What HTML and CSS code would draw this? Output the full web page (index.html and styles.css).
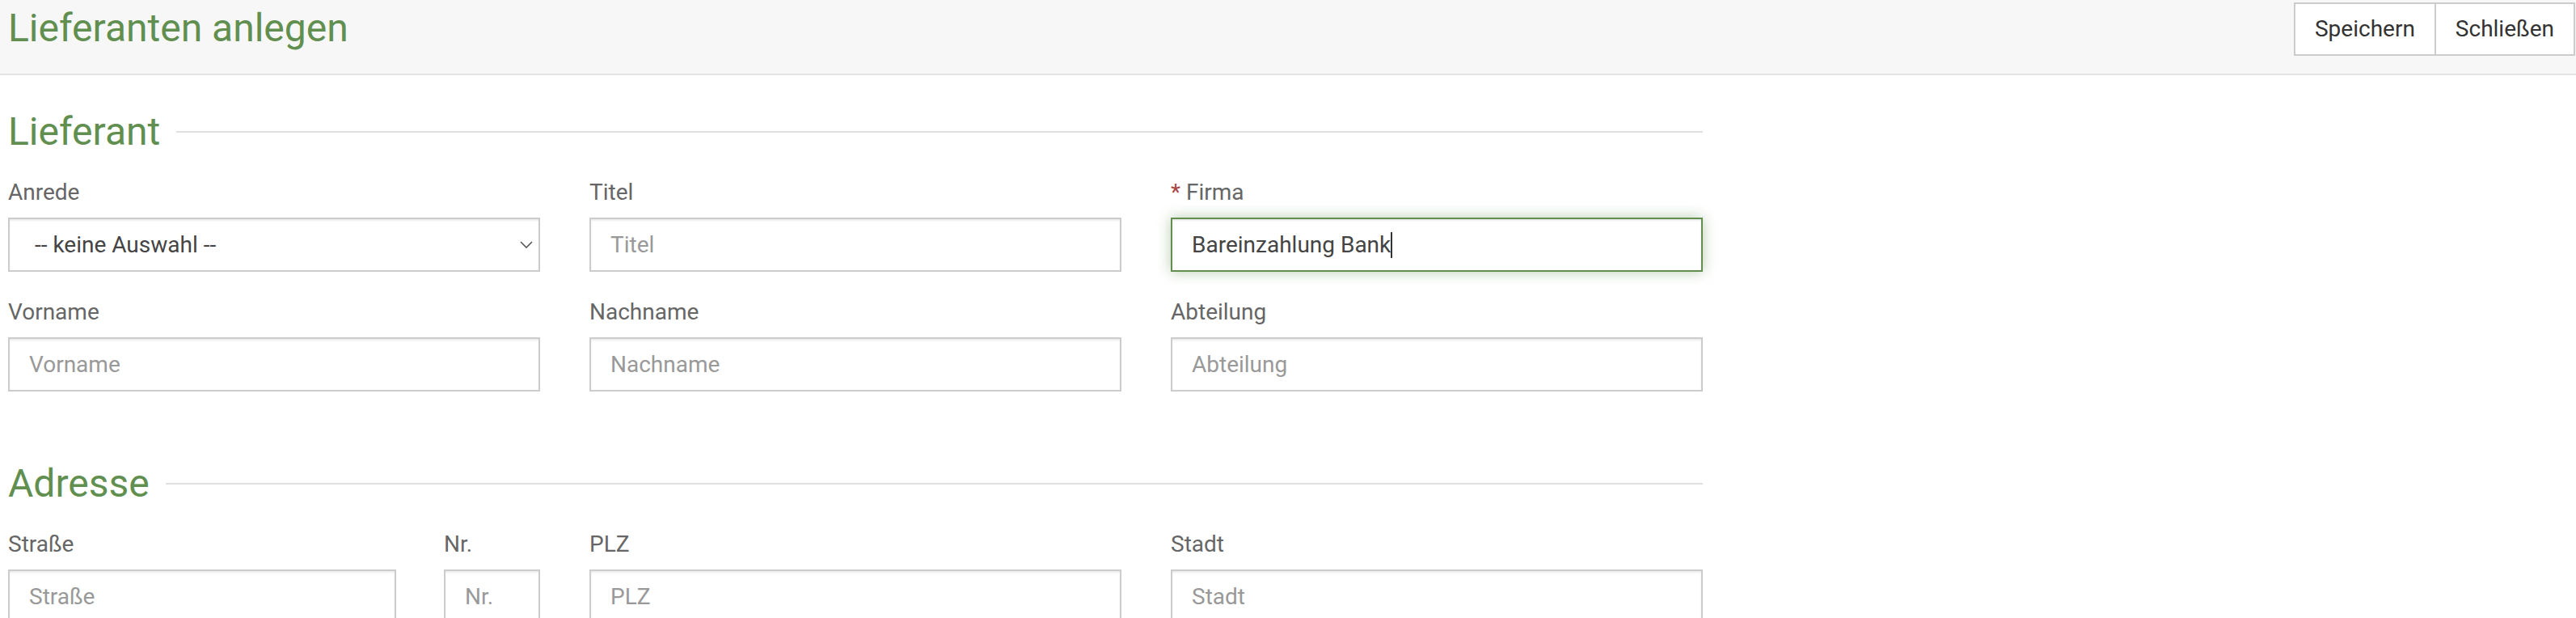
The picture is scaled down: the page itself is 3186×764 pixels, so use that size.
FILE: index.html
```html
<!DOCTYPE html>
<html lang="de">
<head>
<meta charset="utf-8">
<title>Lieferanten anlegen</title>
<link rel="stylesheet" href="styles.css">
</head>
<body>
<header class="topbar">
  <h1 class="page-title">Lieferanten anlegen</h1>
  <div class="btn-group">
    <button type="button" class="btn">Speichern</button>
    <button type="button" class="btn">Schließen</button>
  </div>
</header>
<main class="content">
  <form class="form">
    <section class="fieldset">
      <h2 class="legend">Lieferant</h2>
      <div class="grid">
        <div class="group">
          <label class="label">Anrede</label>
          <div class="field">
            <select class="control select">
              <option>-- keine Auswahl --</option>
            </select>
            <svg class="chevron" width="16" height="9" viewBox="0 0 16 9"><path d="M1 1 L8 8 L15 1" fill="none" stroke="#555" stroke-width="1.6"/></svg>
          </div>
        </div>
        <div class="group">
          <label class="label">Titel</label>
          <div class="field"><input class="control" type="text" placeholder="Titel"></div>
        </div>
        <div class="group">
          <label class="label"><span class="req">*</span> Firma</label>
          <div class="field">
            <input class="control focused" type="text" value="Bareinzahlung Bank">
            <span class="caret"></span>
          </div>
        </div>
        <div class="group">
          <label class="label">Vorname</label>
          <div class="field"><input class="control" type="text" placeholder="Vorname"></div>
        </div>
        <div class="group">
          <label class="label">Nachname</label>
          <div class="field"><input class="control" type="text" placeholder="Nachname"></div>
        </div>
        <div class="group">
          <label class="label">Abteilung</label>
          <div class="field"><input class="control" type="text" placeholder="Abteilung"></div>
        </div>
      </div>
    </section>
    <section class="fieldset">
      <h2 class="legend">Adresse</h2>
      <div class="grid">
        <div class="subgrid">
          <div class="group">
            <label class="label">Straße</label>
            <div class="field"><input class="control" type="text" placeholder="Straße"></div>
          </div>
          <div class="group">
            <label class="label">Nr.</label>
            <div class="field"><input class="control" type="text" placeholder="Nr."></div>
          </div>
        </div>
        <div class="group">
          <label class="label">PLZ</label>
          <div class="field"><input class="control" type="text" placeholder="PLZ"></div>
        </div>
        <div class="group">
          <label class="label">Stadt</label>
          <div class="field"><input class="control" type="text" placeholder="Stadt"></div>
        </div>
      </div>
    </section>
  </form>
</main>
</body>
</html>
```
FILE: styles.css
```css
* { box-sizing: border-box; }

body {
  margin: 0;
  font-family: Roboto, "Liberation Sans", Arial, sans-serif;
  background: #fff;
  color: #555;
}

.topbar {
  height: 93px;
  background: #f7f7f7;
  border-bottom: 2px solid #e3e3e3;
  display: flex;
  justify-content: space-between;
  align-items: flex-start;
  padding-left: 10px;
}

.page-title {
  margin: 9px 0 0;
  font-size: 48px;
  line-height: 52.8px;
  font-weight: 400;
  color: #618f50;
}

.btn-group {
  display: flex;
  margin-top: 3px;
  margin-right: 1px;
}

.btn {
  font-family: Roboto, "Liberation Sans", Arial, sans-serif;
  font-size: 28px;
  line-height: 40px;
  color: #333;
  background: #fff;
  border: 2px solid #ccc;
  padding: 11px 24px;
  margin: 0;
  border-radius: 0;
}

.btn + .btn { margin-left: -2px; }

.content {
  padding: 44px 0 0 10px;
}

.form {
  width: 2096px;
}

.fieldset + .fieldset {
  margin-top: 58px;
}

.legend {
  display: flex;
  align-items: center;
  gap: 20px;
  margin: 0 0 28px;
  font-size: 48px;
  line-height: 52.8px;
  font-weight: 400;
  color: #618f50;
}

.legend::after {
  content: "";
  flex: 1;
  height: 2px;
  background: #e0e0e0;
}

.grid {
  display: grid;
  grid-template-columns: repeat(3, 1fr);
  column-gap: 61px;
}

.subgrid {
  display: grid;
  grid-template-columns: 480px 1fr;
  column-gap: 59px;
}

.group {
  margin-bottom: 30px;
}

.label {
  display: block;
  font-size: 28px;
  line-height: 40px;
  margin-bottom: 11px;
  color: #666;
}

.req {
  color: #a94442;
}

.field {
  position: relative;
}

.control {
  display: block;
  width: 100%;
  height: 67px;
  margin: 0;
  border: 2px solid #ccc;
  border-radius: 0;
  padding: 0 24px;
  font-family: Roboto, "Liberation Sans", Arial, sans-serif;
  font-size: 28px;
  color: #555;
  background: #fff;
  box-shadow: inset 0 2px 2px rgba(0, 0, 0, 0.075);
  outline: none;
}

.control::placeholder {
  color: #999;
}

.select {
  appearance: none;
  -webkit-appearance: none;
  padding-left: 31px;
  color: #444;
}

.chevron {
  position: absolute;
  right: 9px;
  top: 29px;
  pointer-events: none;
}

.focused {
  border-color: #628f50;
  color: #444;
  box-shadow: inset 0 2px 2px rgba(0, 0, 0, 0.075), 0 0 16px rgba(98, 143, 80, 0.45);
}

.caret {
  position: absolute;
  left: 272px;
  top: 18px;
  width: 2px;
  height: 32px;
  background: #333;
}
```
